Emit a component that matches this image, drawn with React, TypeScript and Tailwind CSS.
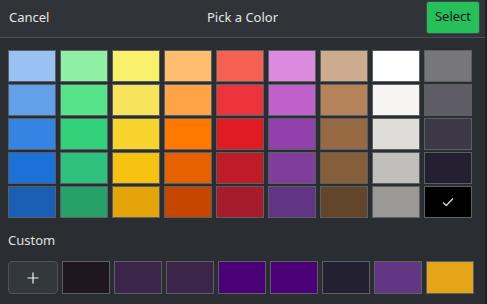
const palette: string[][] = [
  ["#99c1f1", "#8ff0a4", "#f9f06b", "#ffbe6f", "#f66151", "#dc8add", "#cdab8f", "#ffffff", "#77767b"],
  ["#62a0ea", "#57e389", "#f8e45c", "#ffa348", "#ed333b", "#c061cb", "#b5835a", "#f6f5f4", "#5e5c64"],
  ["#3584e4", "#33d17a", "#f6d32d", "#ff7800", "#e01b24", "#9141ac", "#986a44", "#deddda", "#3d3846"],
  ["#1c71d8", "#2ec27e", "#f5c211", "#e66100", "#c01c28", "#813d9c", "#865e3c", "#c0bfbc", "#241f31"],
  ["#1a5fb4", "#26a269", "#e5a50a", "#c64600", "#a51d2d", "#613583", "#63452c", "#9a9996", "#000000"],
];

const custom = ["#1e1720", "#3b2548", "#3b2548", "#4b0077", "#4b0077", "#232131", "#633683", "#e5a518"];

const selected = "#000000";

function Swatch({ color, h = "h-[32px]" }: { color: string; h?: string }) {
  return (
    <div
      className={`w-[48px] ${h} border border-[#5d6063] flex items-center justify-center`}
      style={{ backgroundColor: color }}
    >
      {color === selected && (
        <svg width="12" height="10" viewBox="0 0 12 10">
          <path d="M1 5.5 L4.3 8.5 L11 1.5" stroke="#d6d6d6" strokeWidth="1.3" fill="none" />
        </svg>
      )}
    </div>
  );
}

export default function App() {
  return (
    <div className="w-[487px] h-[304px] flex bg-[#1f2225] font-['Noto_Sans',sans-serif] text-[13px] overflow-hidden">
      <div className="w-[485px] h-full flex flex-col bg-[#2a2d31]">
        <header className="h-[38px] flex items-center justify-between bg-[#303438] border-b border-[#4b4f53] pl-[9px] pr-[5px] relative">
          <button className="text-[#e6e6e6] pb-[1px]">Cancel</button>
          <span className="absolute left-1/2 -translate-x-1/2 top-[8px] text-[#e6e6e6]">Pick a Color</span>
          <button className="mb-[3px] w-[54px] h-[33px] rounded-[3px] bg-[#26c05b] border border-[#3f4a44] text-[#15181a]">
            Select
          </button>
        </header>
        <div className="flex flex-col gap-y-[2px] pl-[8px] pt-[12px]">
          {palette.map((row, i) => (
            <div key={i} className="flex gap-x-[4px]">
              {row.map((c, j) => (
                <Swatch key={j} color={c} />
              ))}
            </div>
          ))}
        </div>
        <div className="pl-[8px] pt-[13px] text-[#e0e0e0] leading-[18px]">Custom</div>
        <div className="flex gap-x-[4px] pl-[8px] pt-[12px]">
          <button className="w-[50px] h-[33px] rounded-[4px] bg-[#32383b] border border-[#4f5457] flex items-center justify-center">
            <svg width="12" height="12" viewBox="0 0 12 12">
              <path d="M6 0.5 V11.5 M0.5 6 H11.5" stroke="#f2f2f2" strokeWidth="1.2" />
            </svg>
          </button>
          {custom.map((c, i) => (
            <Swatch key={i} color={c} h="h-[33px]" />
          ))}
        </div>
      </div>
    </div>
  );
}
